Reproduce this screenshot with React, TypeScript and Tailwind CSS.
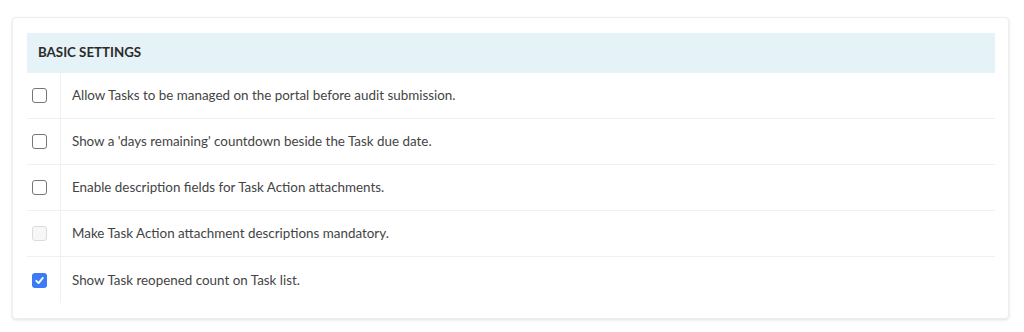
const rows = [
  { label: "Allow Tasks to be managed on the portal before audit submission.", state: "off" },
  { label: "Show a 'days remaining' countdown beside the Task due date.", state: "off" },
  { label: "Enable description fields for Task Action attachments.", state: "off" },
  { label: "Make Task Action attachment descriptions mandatory.", state: "disabled" },
  { label: "Show Task reopened count on Task list.", state: "on" },
];

function Box({ state }: { state: string }) {
  if (state === "on") {
    return (
      <span className="flex h-[15px] w-[15px] items-center justify-center rounded-[3px] bg-[#3b7cf5]">
        <svg width="11" height="11" viewBox="0 0 12 12" fill="none">
          <path d="M2.5 6.3 L5 8.8 L9.6 3.2" stroke="#fff" strokeWidth="2" strokeLinecap="round" strokeLinejoin="round" />
        </svg>
      </span>
    );
  }
  if (state === "disabled") {
    return <span className="block h-[15px] w-[15px] rounded-[3px] border border-[#dcdcdc] bg-[#f7f7f7]" />;
  }
  return <span className="block h-[15px] w-[15px] rounded-[3px] border border-[#767676] bg-white" />;
}

export default function App() {
  return (
    <div className="h-[332px] w-[1024px] bg-white pt-[17px] pl-[12px]" style={{ fontFamily: "Lato, 'Liberation Sans', sans-serif" }}>
      <div className="w-[997px] rounded-[4px] border border-[#eeeeee] bg-white pl-[14px] pr-[13px] pt-[15px] pb-[15px] shadow-[0_1px_3px_rgba(0,0,0,0.12)]">
        <div className="flex h-[40px] items-center bg-[#e5f2f7] pl-[11px] text-[13.3px] font-bold text-[#2b2b2b]">
          BASIC SETTINGS
        </div>
        {rows.map((r, i) => (
          <div
            key={r.label}
            className={`flex h-[46px] ${i < rows.length - 1 ? "border-b border-[#f0f0f0]" : ""}`}
          >
            <div className="flex w-[34px] items-center border-r border-[#f0f0f0] pl-[5px]">
              <Box state={r.state} />
            </div>
            <div className="flex items-center pl-[11px] text-[13.4px] text-[#444444]">{r.label}</div>
          </div>
        ))}
      </div>
    </div>
  );
}
